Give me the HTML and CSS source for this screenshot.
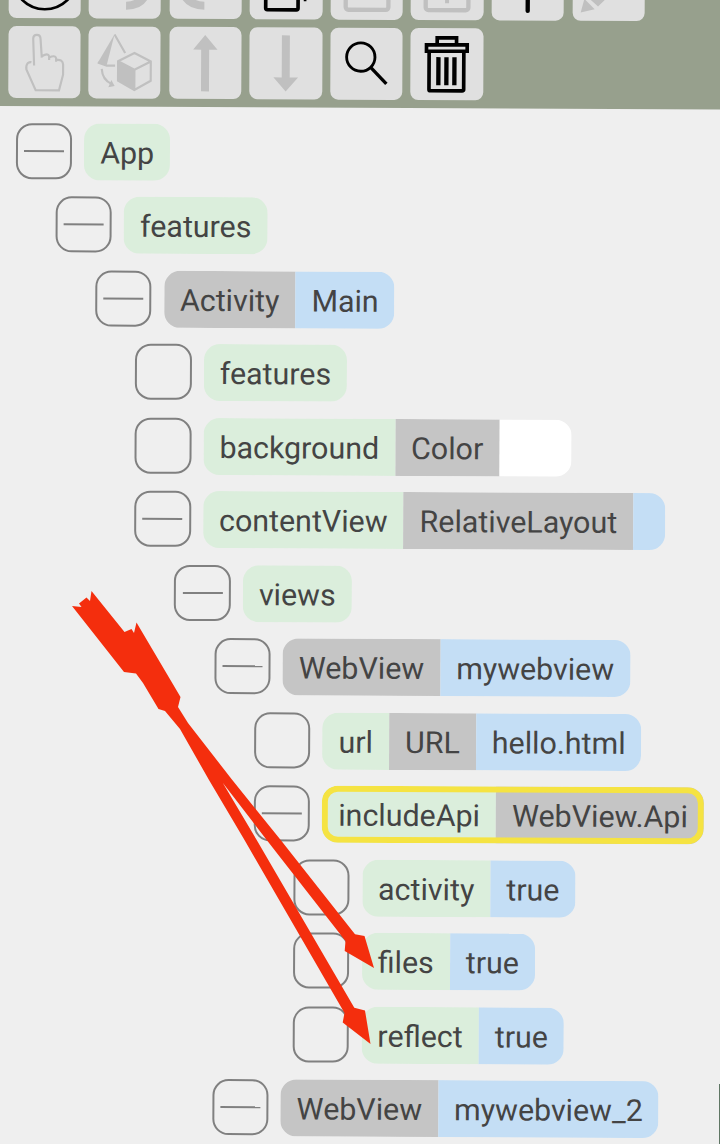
FILE: index.html
```html
<!DOCTYPE html>
<html lang="en">
<head>
<meta charset="utf-8">
<title>App tree</title>
<link rel="stylesheet" href="styles.css">
</head>
<body>
<main class="screen">
  <div class="workspace">
    <header class="toolbar">
      <div class="tools">
        <button class="tool active"><svg viewBox="0 0 217 217"><circle cx="108" cy="93" r="96" stroke-width="8"/></svg></button>
        <button class="tool"><svg viewBox="0 0 217 217"><path class="solid" d="M112 165Q137 165 150 150L180 150Q164 189 112 189Z"/></svg></button>
        <button class="tool"><svg viewBox="0 0 217 217"><path class="solid" d="M104 164Q78 164 66 150L33 150Q53 188 104 188Z"/></svg></button>
        <button class="tool active"><svg viewBox="0 0 217 217"><rect x="48" y="70" width="97" height="117" rx="5" stroke-width="11"/><path d="M166 120V161" stroke-width="8"/></svg></button>
        <button class="tool"><svg viewBox="0 0 217 217"><rect x="45" y="50" width="128" height="136" rx="8" stroke-width="13"/></svg></button>
        <button class="tool"><svg viewBox="0 0 217 217"><rect x="45" y="50" width="128" height="136" rx="8" stroke-width="13"/><path d="M109 100V165" stroke-width="12"/></svg></button>
        <button class="tool active"><svg viewBox="0 0 217 217"><path d="M108 28V187" stroke-width="13" stroke-linecap="round"/></svg></button>
        <button class="tool"><svg viewBox="0 0 217 217"><path class="solid" d="M24 191L35 150L66 181ZM44 144L76 173L150 100L120 70Z"/></svg></button>
      </div>
      <div class="tools">
        <button class="tool"><svg viewBox="0 0 217 217"><path stroke-width="6.500" d="M77 118L74 38Q74 26 85 26T96 38L100 94V90Q119 79 122 90V101V94Q140 85 143 96V106V101Q163 98 164 115V145L152 192H82L54 130Q52 118 58 111Q64 107 69 108"/></svg></button>
        <button class="tool"><svg viewBox="0 0 217 217"><path class="solid" d="M78 23L28 109L55 115Z"/><path stroke-width="6.500" d="M78 24L110 79M28 108L55 117H80M138 79L187 104V162L138 190L89 162V104ZM89 104L138 129L187 104M138 129V190M40 127Q42 160 70 172"/><path class="solid" d="M89 104L138 129V190L89 162ZM69 160L79 178L60 182Z"/></svg></button>
        <button class="tool"><svg viewBox="0 0 217 217"><path class="solid" d="M107 24L144 68H119V193H95V68H71Z"/></svg></button>
        <button class="tool"><svg viewBox="0 0 217 217"><path class="solid" d="M97 24H121V150H146L109 192L72 150H97Z"/></svg></button>
        <button class="tool active"><svg viewBox="0 0 217 217"><circle cx="91" cy="88" r="42.5" stroke-width="8.500"/><path stroke-width="10" d="M120 118L168 168"/></svg></button>
        <button class="tool active"><svg viewBox="0 0 217 217"><path stroke-width="11" d="M80 46V29H138V46M48 50H170V69H48ZM56 70V184Q56 188 61 188H155Q160 188 160 184V70"/><path stroke-width="13" d="M84 87V171M108 87V171M132 87V171"/></svg></button>
      </div>
    </header>
    <div class="tree">
      <div class="row l0"><span class="toggle open"></span><div class="pill"><span class="name">App</span></div></div>
      <div class="row l1"><span class="toggle open"></span><div class="pill"><span class="name">features</span></div></div>
      <div class="row l2"><span class="toggle open"></span><div class="pill"><span class="type">Activity</span><span class="value">Main</span></div></div>
      <div class="row l3"><span class="toggle"></span><div class="pill"><span class="name">features</span></div></div>
      <div class="row l3"><span class="toggle"></span><div class="pill"><span class="name">background</span><span class="type">Color</span><span class="swatch"></span></div></div>
      <div class="row l3"><span class="toggle open"></span><div class="pill"><span class="name">contentView</span><span class="type">RelativeLayout</span><span class="value"></span></div></div>
      <div class="row l4"><span class="toggle open"></span><div class="pill"><span class="name">views</span></div></div>
      <div class="row l5"><span class="toggle open"></span><div class="pill"><span class="type">WebView</span><span class="value">mywebview</span></div></div>
      <div class="row l6"><span class="toggle"></span><div class="pill"><span class="name">url</span><span class="type">URL</span><span class="value">hello.html</span></div></div>
      <div class="row l6"><span class="toggle open"></span><div class="pill selected"><span class="name">includeApi</span><span class="type">WebView.Api</span></div></div>
      <div class="row l7"><span class="toggle"></span><div class="pill"><span class="name">activity</span><span class="value">true</span></div></div>
      <div class="row l7"><span class="toggle"></span><div class="pill"><span class="name">files</span><span class="value">true</span></div></div>
      <div class="row l7"><span class="toggle"></span><div class="pill"><span class="name">reflect</span><span class="value">true</span></div></div>
      <div class="row l5"><span class="toggle open"></span><div class="pill"><span class="type">WebView</span><span class="value">mywebview_2</span></div></div>
    </div>
  </div>
  <svg class="arrows" viewBox="0 0 720 1144">
    <path class="arrow" d="M72 606L81.500 607L79 603.500L86.500 597.500L90 601L91.500 591L124.500 632L131.500 629L134 633L136.500 622.500L180.500 697L178 707L188 723L231.500 779L280.700 840L355 934.300L364.500 936L374 968L344.700 951L345.500 941L266.700 840L222.700 782.700L256.700 840L354.300 1007.700L365 1010.500L370.500 1044L342.700 1022.500L344.500 1013L244.500 840L209 780L180 729L165 711L158.500 709L143 683L136 673.500L124 672Z"/>
  </svg>
  <span class="edge"></span>
</main>
</body>
</html>
```
FILE: styles.css
```css
* { box-sizing: border-box; }
body { margin: 0; background: #efefef; }
.screen {
  position: relative;
  width: 720px;
  height: 1144px;
  overflow: hidden;
  background: #efefef;
  font-family: Roboto, sans-serif;
}
.workspace {
  width: 740px;
  transform: rotate(0.275deg);
  transform-origin: 0 0;
}
.toolbar {
  display: flex;
  flex-direction: column;
  gap: 8px;
  height: 166.200px;
  margin: -60px 0 0 -10px;
  padding: 5.500px 0 7px 18.500px;
  background: #97a08d;
}
.tools { display: flex; gap: 8.200px; }
.tool {
  display: block;
  flex: none;
  width: 72.400px;
  height: 72.400px;
  padding: 0;
  border: 0;
  border-radius: 8px;
  background: #e0e0e0;
  color: #c0c0c0;
}
.tool.active { color: #000; }
.tool svg {
  display: block;
  width: 100%;
  height: 100%;
  fill: none;
  stroke: currentColor;
}
.tool .solid { fill: currentColor; stroke: none; }
.tree {
  display: flex;
  flex-direction: column;
  gap: 16.500px;
  padding: 16.500px 0 0 16.700px;
}
.row { display: flex; gap: 12.300px; height: 57px; }
.l1 { padding-left: 40.200px; }
.l2 { padding-left: 80.400px; }
.l3 { padding-left: 120.600px; }
.l4 { padding-left: 160.800px; }
.l5 { padding-left: 201px; }
.l6 { padding-left: 241.200px; }
.l7 { padding-left: 281.400px; }
.toggle {
  display: flex;
  align-items: center;
  justify-content: center;
  flex: none;
  width: 56.300px;
  height: 56.300px;
  border: 2px solid #808080;
  border-radius: 16px;
}
.open::before {
  content: "";
  width: 40px;
  height: 2px;
  background: #808080;
}
.pill {
  display: flex;
  position: relative;
  height: 57.300px;
  border-radius: 16px;
  overflow: hidden;
  color: #444;
  font-size: 30.400px;
  line-height: 60px;
  white-space: nowrap;
}
.pill span { padding: 0 16px; }
.name { background: #dbeedc; }
.type { background: #c5c5c5; }
.value { background: #c4def5; }
.pill .swatch { width: 72.500px; background: #fff; }
.selected::after {
  content: "";
  position: absolute;
  inset: 0;
  border: 6px solid #f5e342;
  border-radius: 16px;
}
.arrows { position: absolute; inset: 0; width: 720px; height: 1144px; }
.arrow { fill: #f42e0d; }
.edge {
  position: absolute;
  right: 0;
  bottom: 0;
  width: 1px;
  height: 60px;
  background: #5f7664;
}
```
